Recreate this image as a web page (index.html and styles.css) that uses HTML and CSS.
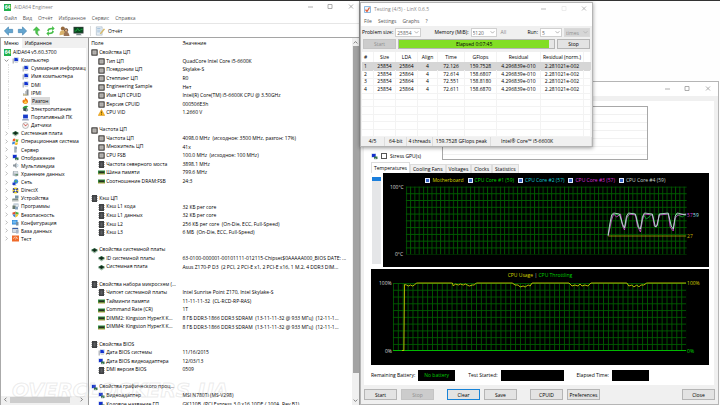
FILE: index.html
```html
<!DOCTYPE html>
<html lang="ru">
<head>
<meta charset="utf-8">
<title>AIDA64 Engineer</title>
<link rel="stylesheet" href="styles.css">
</head>
<body>
<svg class="defs" aria-hidden="true">
  <symbol id="cpu" viewBox="0 0 14 14"><rect x=".5" y=".5" width="13" height="13" rx="1.5" fill="#4a4744"/><rect x="3" y="3" width="8" height="8" fill="#c9c7c3"/><rect x="4.500" y="4.500" width="5" height="5" fill="#aaa8a5"/></symbol>
  <symbol id="chip" viewBox="0 0 14 14"><path d="M2 0h10v14H2z" fill="#3f4143"/><path d="M1 2h1v2H1zm0 4h1v2H1zm0 4h1v2H1zM12 2h1v2h-1zm0 4h1v2h-1zm0 4h1v2h-1z" fill="#777"/><path d="M5 3h4v8H5z" fill="#5c5f62"/></symbol>
  <symbol id="ram" viewBox="0 0 14 14"><path d="M0 3h14v7H0z" fill="#2d8a3e"/><path d="M2 5h10v3H2z" fill="#2a2d22"/><path d="M0 9h14v2H0z" fill="#b59a3c"/></symbol>
  <symbol id="board" viewBox="0 0 14 14"><path d="M0 6l7-4 7 4-7 5z" fill="#225c36"/><path d="M3 6l4-2 4 2-4 3z" fill="#14221a"/><path d="M0 6l7 5 7-5v2l-7 5-7-5z" fill="#9fb8a5"/></symbol>
  <symbol id="warn" viewBox="0 0 14 14"><path d="M7 1l6.500 12H.5z" fill="#f9b820" stroke="#d98b0c"/><path d="M6.300 5h1.400v4H6.300zm0 5h1.400v1.500H6.300z" fill="#40300a"/></symbol>
  <symbol id="pc" viewBox="0 0 14 14"><path d="M1 3h3v10H1z" fill="#b8bcc4"/><path d="M4 1h9v8H4z" fill="#9eb4dc"/><path d="M5 2h7v6H5z" fill="#1330cf"/><path d="M9 2h3v4z" fill="#5b86ee"/><path d="M6 9h5l1 3H5z" fill="#d2d6dd"/></symbol>
  <symbol id="display" viewBox="0 0 14 14"><path d="M1 1h9v8H1z" fill="#a9b9dc"/><path d="M2 2h7v6H2z" fill="#1330cf"/><path d="M6 7h7v5H6z" fill="#36734a"/><path d="M8 10l5 3H6z" fill="#c8ccd2"/></symbol>
  <symbol id="server" viewBox="0 0 14 14"><path d="M5 1h5v12H5z" fill="#bfc8cf"/><path d="M5 1h2v12H5z" fill="#8798a4"/><path d="M7.500 3h2v1h-2zm0 2h2v1h-2z" fill="#4e6d84"/></symbol>
  <symbol id="ipmi" viewBox="0 0 14 14"><path d="M2 8h3v5H2zm4-4h3v9H6z" fill="#c2c5c9"/><path d="M9 1h4v12H9z" fill="#818890"/><path d="M2 11h8v2H2z" fill="#b8a86c"/></symbol>
  <symbol id="flame" viewBox="0 0 14 14"><path d="M6 0c0 3 6 4 6 9 0 3-2 5-5 5s-6-2-6-5c0-2 1-3 2-4l1 2c2-2 2-4 2-7z" fill="#ee7b13"/><path d="M7 6c0 2 3 3 3 5 0 1-1 2-3 2s-3-1-3-3c1 0 2-1 3-4z" fill="#ffd044"/></symbol>
  <symbol id="power" viewBox="0 0 14 14"><path d="M1 7c1-5 8-7 12-4-3 0-4 3-4 5z" fill="#2f9a3f"/><path d="M3 6l8 1-2 6-7-2z" fill="#3b4a4c"/><circle cx="10" cy="10" r="2.500" fill="#88a7a2"/></symbol>
  <symbol id="laptop" viewBox="0 0 14 14"><path d="M2 1h10v8H2z" fill="#3e65d8"/><path d="M3 2h8v6H3z" fill="#173ac8"/><path d="M1 10h12l1 3H0z" fill="#98a4bb"/></symbol>
  <symbol id="gauge" viewBox="0 0 14 14"><circle cx="7" cy="7" r="6" fill="#f3f3f3" stroke="#858585"/><path d="M3 4l5 4M7 8l4-4" stroke="#d3392e" stroke-width="1.500"/></symbol>
  <symbol id="windows" viewBox="0 0 14 14"><path d="M2 2q3-2 5 0L6 7Q4 5 1 7z" fill="#ec5a29"/><path d="M8 2q3 2 5 0l-1 5q-2 2-5 0z" fill="#73b53a"/><path d="M1 8q3-2 5 0l-1 5q-2-2-5 0z" fill="#3b86d6"/><path d="M7 8q3 2 5 0l-1 5q-3 2-5 0z" fill="#f7bd25"/></symbol>
  <symbol id="sound" viewBox="0 0 14 14"><path d="M2 5h3l4-4v12L5 9H2z" fill="#8c969e"/><path d="M11 4q2 3 0 6" stroke="#9ec2da" fill="none" stroke-width="1.500"/></symbol>
  <symbol id="storage" viewBox="0 0 14 14"><path d="M2 2h10l1 9-5 2-7-2z" fill="#aeb7be"/><path d="M4 3h7v4H4z" fill="#d7dee2"/><path d="M7 8h5v3H7z" fill="#628c6b"/></symbol>
  <symbol id="net" viewBox="0 0 14 14"><circle cx="8" cy="5" r="4.500" fill="#3a8ae0"/><path d="M5 4l3-2 2 3-3 3z" fill="#55b05a"/><path d="M1 7h6v5H1z" fill="#1c3cc9"/><path d="M2 12h7v1H2z" fill="#aaa"/></symbol>
  <symbol id="dx" viewBox="0 0 14 14"><circle cx="7" cy="7" r="6" fill="#f2d51d"/><path d="M2 3l10 8M12 3L2 11" stroke="#273b9b" stroke-width="3"/><circle cx="7" cy="7" r="2" fill="#fff"/></symbol>
  <symbol id="devices" viewBox="0 0 14 14"><path d="M6 1h7v6H6z" fill="#7795a6"/><path d="M1 7h11l1 4H0z" fill="#7e8a84"/><path d="M0 11h13v2H0z" fill="#b7bdb9"/></symbol>
  <symbol id="apps" viewBox="0 0 14 14"><path d="M3 1h10v7H3z" fill="#a5b5c5"/><path d="M4 3h8v4H4z" fill="#e7edf1"/><path d="M1 5h6v7H1z" fill="#69796d"/><path d="M6 8h6v5H6z" fill="#89a5bd"/></symbol>
  <symbol id="shield" viewBox="0 0 14 14"><path d="M7 1v6H1V3q3 0 6-2z" fill="#e44b2c"/><path d="M7 1q3 2 6 2v4H7z" fill="#4caf43"/><path d="M1 7h6v6Q2 11 1 7z" fill="#3581de"/><path d="M7 7h6q-1 4-6 6z" fill="#f7c62c"/></symbol>
  <symbol id="config" viewBox="0 0 14 14"><path d="M0 2h11v9H0z" fill="#2b84d6"/><path d="M1 3h8v6H1z" fill="#72b8ee"/><path d="M8 6h5v7H8z" fill="#7790a5"/></symbol>
  <symbol id="db" viewBox="0 0 14 14"><path d="M1 2h11v9H1z" fill="#d4dbe4" stroke="#7b8798"/><path d="M1 2h11v2H1z" fill="#385da6"/><path d="M8 6h5v7H8z" fill="#a8b4c6"/></symbol>
  <symbol id="test" viewBox="0 0 14 14"><path d="M0 1h14v12H0z" fill="#ef6a2a"/><path d="M3 8a4 4 0 018 0M7 9l2-4" stroke="#fff" fill="none"/></symbol>
  <symbol id="down" viewBox="0 0 8 8"><path d="M1 2.500l3 3 3-3" fill="none" stroke="currentColor"/></symbol>
</svg>

<main class="desktop">
<section class="window aida" aria-label="AIDA64 Engineer">
  <header class="titlebar"><span class="logo">64</span><h1>AIDA64 Engineer</h1>
    <svg class="wincontrols" viewBox="0 0 48 8"><path d="M1 4h5M21 1.500h4v4h-4zM42 1.500l4 4M46 1.500l-4 4" fill="none" stroke="#999" stroke-width=".8"/></svg></header>
  <nav class="menubar"><a href="#">Файл</a><a href="#">Вид</a><a href="#">Отчёт</a><a href="#">Избранное</a><a href="#">Сервис</a><a href="#">Справка</a></nav>
  <div class="toolbar">
    <button aria-label="Назад"><svg viewBox="0 0 12 12"><path d="M1 6l5-5v3h5v4H6v3z" fill="#64a5cf" stroke="#3e7fae" stroke-width=".7"/></svg></button>
    <button aria-label="Вперёд"><svg viewBox="0 0 12 12"><path d="M11 6L6 1v3H1v4h5v3z" fill="#64a5cf" stroke="#3e7fae" stroke-width=".7"/></svg></button>
    <button aria-label="Вверх"><svg viewBox="0 0 12 12"><path d="M6 1l4 4-2 .3q-2 3 1 6.200Q4 10 5 5L2 5z" fill="#4cc64a" stroke="#269a32" stroke-width=".5"/></svg></button>
    <button aria-label="Обновить"><svg viewBox="0 0 12 12"><path d="M2 6q0-4 6-4V0l3 3-3 3V4Q4 4 4 6zM10 6q0 4-6 4v2L1 9l3-3v2q4 0 4-2z" fill="#46be48"/></svg></button>
    <button aria-label="Пользователи"><svg viewBox="0 0 12 12"><circle cx="4" cy="3" r="2.400" fill="#96693d"/><path d="M0 11q0-6 4-6t4 5z" fill="#d8b26b"/><circle cx="8" cy="5" r="2.300" fill="#5b3c28"/><circle cx="8" cy="5.500" r="1.500" fill="#e0ae80"/><path d="M5 12q0-5 3-5t4 5z" fill="#9b7456"/></svg></button>
    <button aria-label="Монитор"><svg viewBox="0 0 12 12"><path d="M0 1h12v8H0z" fill="#30383a"/><path d="M1 2h10v6H1z" fill="#064b1d"/><path d="M1 6h2l2-3 2 3 2-2h2" stroke="#25bd4c" fill="none" stroke-width=".8"/><path d="M4 9h4l2 2H3z" fill="#788"/></svg></button>
    <button class="report"><svg viewBox="0 0 12 12"><path d="M1 1h7v10H1z" fill="#e6eef5" stroke="#96a9b8" stroke-width=".6"/><path d="M2 3h4M2 5h4M2 7h4" stroke="#7fa9cb" stroke-width=".7"/><path d="M5 9l5-6 1.500 1-5 6z" fill="#d6b96a"/></svg>Отчёт</button>
  </div>
  <div class="workspace">
    <aside class="sidebar">
      <div class="sidetabs"><button class="on">Меню</button><button>Избранное</button></div>
      <ul class="tree">
        <li class="root"><span class="logo">64</span>AIDA64 v5.60.3700</li>
        <li class="open"><svg class="chev"><use href="#down"/></svg><svg><use href="#pc"/></svg>Компьютер</li>
        <li class="sub"><svg><use href="#pc"/></svg>Суммарная информация</li>
        <li class="sub"><svg><use href="#pc"/></svg>Имя компьютера</li>
        <li class="sub"><svg><use href="#pc"/></svg>DMI</li>
        <li class="sub"><svg><use href="#ipmi"/></svg>IPMI</li>
        <li class="sub"><svg><use href="#flame"/></svg><span class="picked">Разгон</span></li>
        <li class="sub"><svg><use href="#power"/></svg>Электропитание</li>
        <li class="sub"><svg><use href="#laptop"/></svg>Портативный ПК</li>
        <li class="sub"><svg><use href="#gauge"/></svg>Датчики</li>
        <li><svg class="chev"><use href="#down"/></svg><svg><use href="#board"/></svg>Системная плата</li>
        <li><svg class="chev"><use href="#down"/></svg><svg><use href="#windows"/></svg>Операционная система</li>
        <li><svg class="chev"><use href="#down"/></svg><svg><use href="#server"/></svg>Сервер</li>
        <li><svg class="chev"><use href="#down"/></svg><svg><use href="#display"/></svg>Отображение</li>
        <li><svg class="chev"><use href="#down"/></svg><svg><use href="#sound"/></svg>Мультимедиа</li>
        <li><svg class="chev"><use href="#down"/></svg><svg><use href="#storage"/></svg>Хранение данных</li>
        <li><svg class="chev"><use href="#down"/></svg><svg><use href="#net"/></svg>Сеть</li>
        <li><svg class="chev"><use href="#down"/></svg><svg><use href="#dx"/></svg>DirectX</li>
        <li><svg class="chev"><use href="#down"/></svg><svg><use href="#devices"/></svg>Устройства</li>
        <li><svg class="chev"><use href="#down"/></svg><svg><use href="#apps"/></svg>Программы</li>
        <li><svg class="chev"><use href="#down"/></svg><svg><use href="#shield"/></svg>Безопасность</li>
        <li><svg class="chev"><use href="#down"/></svg><svg><use href="#config"/></svg>Конфигурация</li>
        <li><svg class="chev"><use href="#down"/></svg><svg><use href="#db"/></svg>База данных</li>
        <li><svg class="chev"><use href="#down"/></svg><svg><use href="#test"/></svg>Тест</li>
      </ul>
      <div class="hscroll"><svg class="left"><use href="#down"/></svg><span></span><svg class="right"><use href="#down"/></svg></div>
    </aside>
    <div class="details">
      <table class="props">
        <thead><tr><th>Поле</th><th>Значение</th></tr></thead>
        <tbody>
          <tr class="group"><th><svg><use href="#cpu"/></svg>Свойства ЦП</th></tr>
          <tr><td><svg><use href="#cpu"/></svg>Тип ЦП</td><td>QuadCore Intel Core i5-6600K</td></tr>
          <tr><td><svg><use href="#cpu"/></svg>Псевдоним ЦП</td><td>Skylake-S</td></tr>
          <tr><td><svg><use href="#cpu"/></svg>Степпинг ЦП</td><td>R0</td></tr>
          <tr><td><svg><use href="#cpu"/></svg>Engineering Sample</td><td>Нет</td></tr>
          <tr><td><svg><use href="#cpu"/></svg>Имя ЦП CPUID</td><td>Intel(R) Core(TM) i5-6600K CPU @ 3.50GHz</td></tr>
          <tr><td><svg><use href="#cpu"/></svg>Версия CPUID</td><td>000506E3h</td></tr>
          <tr><td><svg><use href="#warn"/></svg>CPU VID</td><td>1.2660 V</td></tr>
          <tr></tr>
          <tr class="group"><th><svg><use href="#cpu"/></svg>Частота ЦП</th></tr>
          <tr><td><svg><use href="#cpu"/></svg>Частота ЦП</td><td>4098.0 MHz&nbsp; (исходное: 3500 MHz, разгон: 17%)</td></tr>
          <tr><td><svg><use href="#cpu"/></svg>Множитель ЦП</td><td>41x</td></tr>
          <tr><td><svg><use href="#cpu"/></svg>CPU FSB</td><td>100.0 MHz&nbsp; (исходное: 100 MHz)</td></tr>
          <tr><td><svg><use href="#chip"/></svg>Частота северного моста</td><td>3898.1 MHz</td></tr>
          <tr><td><svg><use href="#ram"/></svg>Шина памяти</td><td>799.6 MHz</td></tr>
          <tr><td><svg><use href="#ram"/></svg>Соотношение DRAM:FSB</td><td>24:3</td></tr>
          <tr></tr>
          <tr class="group"><th><svg><use href="#chip"/></svg>Кэш ЦП</th></tr>
          <tr><td><svg><use href="#chip"/></svg>Кэш L1 кода</td><td>32 КБ per core</td></tr>
          <tr><td><svg><use href="#chip"/></svg>Кэш L1 данных</td><td>32 КБ per core</td></tr>
          <tr><td><svg><use href="#chip"/></svg>Кэш L2</td><td>256 КБ per core&nbsp; (On-Die, ECC, Full-Speed)</td></tr>
          <tr><td><svg><use href="#chip"/></svg>Кэш L3</td><td>6 МБ&nbsp; (On-Die, ECC, Full-Speed)</td></tr>
          <tr></tr>
          <tr class="group"><th><svg><use href="#board"/></svg>Свойства системной платы</th></tr>
          <tr><td><svg><use href="#board"/></svg>ID системной платы</td><td>63-0100-000001-00101111-012115-Chipset$0AAAAA000_BIOS DATE: ...</td></tr>
          <tr><td><svg><use href="#board"/></svg>Системная плата</td><td>Asus Z170-P D3&nbsp; (2 PCI, 2 PCI-E x1, 2 PCI-E x16, 1 M.2, 4 DDR3 DIM...</td></tr>
          <tr></tr>
          <tr class="group"><th><svg><use href="#chip"/></svg>Свойства набора микросхем (...</th></tr>
          <tr><td><svg><use href="#chip"/></svg>Чипсет системной платы</td><td>Intel Sunrise Point Z170, Intel Skylake-S</td></tr>
          <tr><td><svg><use href="#ram"/></svg>Тайминги памяти</td><td>11-11-11-32&nbsp; (CL-RCD-RP-RAS)</td></tr>
          <tr><td><svg><use href="#ram"/></svg>Command Rate (CR)</td><td>1T</td></tr>
          <tr><td><svg><use href="#ram"/></svg>DIMM2: Kingston HyperX K...</td><td>8 ГБ DDR3-1866 DDR3 SDRAM&nbsp; (13-11-11-32 @ 933 МГц)&nbsp; (12-11-1...</td></tr>
          <tr><td><svg><use href="#ram"/></svg>DIMM4: Kingston HyperX K...</td><td>8 ГБ DDR3-1866 DDR3 SDRAM&nbsp; (13-11-11-32 @ 933 МГц)&nbsp; (12-11-1...</td></tr>
          <tr></tr>
          <tr class="group"><th><svg><use href="#chip"/></svg>Свойства BIOS</th></tr>
          <tr><td><svg><use href="#pc"/></svg>Дата BIOS системы</td><td>11/16/2015</td></tr>
          <tr><td><svg><use href="#display"/></svg>Дата BIOS видеоадаптера</td><td>12/03/13</td></tr>
          <tr><td><svg><use href="#chip"/></svg>DMI версия BIOS</td><td>0509</td></tr>
          <tr></tr>
          <tr class="group"><th><svg><use href="#display"/></svg>Свойства графического проц...</th></tr>
          <tr><td><svg><use href="#display"/></svg>Видеоадаптер</td><td>MSI N780Ti (MS-V298)</td></tr>
          <tr><td><svg><use href="#display"/></svg>Кодовое название ГП</td><td>GK110B&nbsp; (PCI Express 3.0 x16 10DE / 100A, Rev B1)</td></tr>
        </tbody>
      </table>
      <div class="vscroll"><svg class="up"><use href="#down"/></svg><span></span><svg><use href="#down"/></svg></div>
    </div>
  </div>
  <p class="watermark">OVERCLOCKERS.UA</p>
</section>

<section class="window stability" aria-label="Stability test">
  <header class="titlebar"><svg class="wincontrols" viewBox="0 0 48 8"><path d="M1 4h5M21 1.500h4v4h-4zM42 1.500l4 4M46 1.500l-4 4" fill="none" stroke="#999" stroke-width=".8"/></svg></header>
  <div class="panel">
    <div class="stress">
      <label><svg><use href="#display"/></svg><input type="checkbox">Stress GPU(s)</label>
      <div class="log"></div>
    </div>
    <div class="tabs"><button class="on">Temperatures</button><button>Cooling Fans</button><button>Voltages</button><button>Clocks</button><button>Statistics</button></div>
    <div class="sensors">
      <div class="gutter"></div>
      <div class="graph">
        <div class="legend">
          <label class="yellow"><input type="checkbox" checked>Motherboard</label>
          <label class="green"><input type="checkbox" checked>CPU Core #1 (59)</label>
          <label class="cyan"><input type="checkbox" checked>CPU Core #2 (57)</label>
          <label class="magenta"><input type="checkbox" checked>CPU Core #3 (57)</label>
          <label class="white"><input type="checkbox" checked>CPU Core #4 (59)</label>
        </div>
        <svg class="plot" viewBox="382 185 328 82" preserveAspectRatio="none">
          <defs><pattern id="g1" x="405" y="186.500" width="4.300" height="6.770" patternUnits="userSpaceOnUse"><path d="M0 .5h4.300M.5 0v6.770" stroke="#005c00" stroke-width=".9"/></pattern></defs>
          <rect x="405" y="186.500" width="282.500" height="68" fill="url(#g1)"/>
          <g fill="none" stroke-width=".8">
            <path d="M608.500 236H687" stroke="#b5a500"/>
            <path d="M608.500 236L611 221L613 214L620 215L622 222L624 227L626 226L628 215L634 213L637 217L640 229L642 226L644 215L647 219L651 216L653 214L656 227L658 226L660 214L669 214L672 226L674 228L677 214L683 217L687 214" stroke="#18b53a"/>
            <path d="M608.500 236L612 220L614 214L617 217L621 214L623 226L625 230L627 218L630 214L636 215L638 226L641 232L643 220L645 214L653 215L655 226L657 227L660 215L669 214L671 227L674 231L676 218L679 215L687 214" stroke="#dc4bdc"/>
            <path d="M608.500 235L610 225L612 215L614 213L620 214L623 224L625 228L627 216L629 213L636 214L639 227L641 229L643 217L645 213L653 214L656 227L658 225L660 214L669 213L672 226L674 229L676 216L678 213L687 215" stroke="#c9e9e2"/>
          </g>
          <g class="axis"><text x="389" y="189">100°C</text><text x="394" y="256">0°C</text><text x="688" y="217.500" fill="#d941d9">57</text><text x="694" y="217.500" fill="#9eeaf0">59</text><text x="688" y="238" fill="#c9b900">27</text></g>
        </svg>
      </div>
    </div>
    <div class="graph usage">
      <p class="caption"><span class="yellow">CPU Usage</span> | <span class="green">CPU Throttling</span></p>
      <svg class="plot" viewBox="371 281 339 84" preserveAspectRatio="none">
        <defs><pattern id="g2" x="393" y="283" width="4.900" height="6.770" patternUnits="userSpaceOnUse"><path d="M0 .5h4.900M.5 0v6.770" stroke="#005c00" stroke-width=".9"/></pattern></defs>
        <rect x="393" y="283" width="294" height="67.500" fill="url(#g2)"/>
        <path d="M393 350.500H687" stroke="#00b900"/>
        <path d="M402 350.500h2l.6-66 2 .5 2 1 2-1 2 1 2-1 2-2h36l1 3 2-2 3 1 2-1 3 1 2-1 4 2 3-1 2 0 2-2h36l3 2 3 0 2 2 3-1 2 1 3-2 2 1 2-3h37l3 3 3-1 3 1 2-2 2 2 3-1 3 1 3-3h36l2 3 3-1 2 2 3-2 2 2 2-2 3 0 3-2H687" fill="none" stroke="#c6c900" stroke-width=".9"/>
        <g class="axis"><text x="379" y="285">100%</text><text x="385" y="353">0%</text><text x="688" y="285" fill="#d2d200">100%</text><text x="688" y="353" fill="#00d900">0%</text></g>
      </svg>
    </div>
    <div class="status"><span>Remaining Battery:</span><output class="box short">No battery</output><span>Test Started:</span><output class="box long"></output><span>Elapsed Time:</span><output class="box short"></output></div>
  </div>
  <footer class="actions"><button>Start</button><button disabled>Stop</button><button class="focus gap">Clear</button><button>Save</button><button class="gap">CPUID</button><button>Preferences</button><button class="last">Close</button></footer>
</section>

<section class="window linx" aria-label="LinX">
  <header class="titlebar"><svg class="appicon" viewBox="0 0 14 14"><path d="M1 1h12v12H1z" fill="#eef4fa" stroke="#6ea5d6" stroke-width="1.500"/><path d="M3 7l3 4 5-8" fill="none" stroke="#e2562c" stroke-width="2.500"/></svg><h2>Testing (4/5) - LinX 0.6.5</h2>
    <svg class="wincontrols" viewBox="0 0 48 8"><path d="M1 4h5M42 1.500l4 4M46 1.500l-4 4" fill="none" stroke="#aaa" stroke-width=".8"/><path d="M22 1.500h4v4h-4z" fill="none" stroke="#e8e8e8" stroke-width=".8"/></svg></header>
  <nav class="menubar"><a href="#">File</a><a href="#">Settings</a><a href="#">Graphs</a><a href="#">?</a></nav>
  <form class="options">
    <label for="size">Problem size:</label><select id="size"><option>25854</option></select>
    <label for="mem" class="push">Memory (MiB):</label><select id="mem"><option>5120</option></select><button type="button" class="all">All</button>
    <label for="run" class="push">Run:</label><select id="run"><option>5</option></select><select class="times" aria-label="Unit" disabled><option>times</option></select>
  </form>
  <div class="runbar"><button disabled>Start</button><div class="progress"><div>Elapsed 0:07:45</div></div><button>Stop</button></div>
  <table class="results">
    <thead><tr><th>#</th><th>Size</th><th>LDA</th><th>Align</th><th>Time</th><th>GFlops</th><th>Residual</th><th>Residual (norm.)</th><th></th></tr></thead>
    <tbody>
      <tr class="sel"><td>1</td><td>25854</td><td>25864</td><td>4</td><td>72.126</td><td>159.7528</td><td>4.296839e-010</td><td>2.281021e-002</td><td></td></tr>
      <tr><td>2</td><td>25854</td><td>25864</td><td>4</td><td>72.614</td><td>158.6807</td><td>4.296839e-010</td><td>2.281021e-002</td><td></td></tr>
      <tr><td>3</td><td>25854</td><td>25864</td><td>4</td><td>72.551</td><td>158.8180</td><td>4.296839e-010</td><td>2.281021e-002</td><td></td></tr>
      <tr><td>4</td><td>25854</td><td>25864</td><td>4</td><td>72.611</td><td>158.6870</td><td>4.296839e-010</td><td>2.281021e-002</td><td></td></tr>
      <tr><td></td><td></td><td></td><td></td><td></td><td></td><td></td><td></td><td></td></tr>
      <tr><td></td><td></td><td></td><td></td><td></td><td></td><td></td><td></td><td></td></tr>
      <tr><td></td><td></td><td></td><td></td><td></td><td></td><td></td><td></td><td></td></tr>
      <tr><td></td><td></td><td></td><td></td><td></td><td></td><td></td><td></td><td></td></tr>
      <tr><td></td><td></td><td></td><td></td><td></td><td></td><td></td><td></td><td></td></tr>
      <tr><td></td><td></td><td></td><td></td><td></td><td></td><td></td><td></td><td></td></tr>
    </tbody>
  </table>
  <footer class="statusbar"><span>4/5</span><span>64-bit</span><span>4 threads</span><span>159.7528 GFlops peak</span><span>Intel® Core™ i5-6600K</span></footer>
</section>
</main>
</body>
</html>
```
FILE: styles.css
```css
* { box-sizing: border-box; }
html, body { height: 100%; }
body {
  margin: 0;
  background: #fefefe;
  color: #000;
  font: 5px/8px "Open Sans", "Noto Sans", sans-serif;
}
button, input, select { font: inherit; color: inherit; margin: 0; padding: 0; }
h1, h2, p { margin: 0; font: inherit; }
a { color: inherit; text-decoration: none; }
table { border-spacing: 0; }
th, td { padding: 0; font-weight: normal; text-align: left; }
.defs { position: absolute; width: 0; height: 0; }

.desktop { position: relative; height: 100%; overflow: hidden; border-top: 1px solid #333; }
.window { position: absolute; display: flex; flex-direction: column; background: #fff; }
.titlebar { display: flex; align-items: center; flex: none; color: #858585; }
.wincontrols { width: 48px; height: 8px; margin-left: auto; }
.menubar { display: flex; color: #555; flex: none; align-items: center; }
.logo { flex: none; width: 7px; height: 7px; background: #22b14c; color: #fff; font-size: 5px; line-height: 7px; font-weight: bold; text-align: center; }

/* AIDA64 */
.aida { inset: 0 50% 0 0; border-right: 1px solid #999; overflow: hidden; }
.aida .titlebar { height: 12px; padding: 0 4px; gap: 3px; }
.aida .menubar { height: 10px; padding-left: 4px; gap: 6px; }
.toolbar { display: flex; flex: none; align-items: center; gap: 3px; height: 14px; padding-left: 3px; border-top: 1px solid #e6e6e6; }
.toolbar button { display: flex; align-items: center; gap: 2px; border: 0; background: none; }
.toolbar svg { width: 11px; height: 10px; }
.toolbar .report { margin-left: 3px; padding-left: 4px; border-left: 1px solid #ddd; }
.workspace { display: flex; flex: 1; min-height: 0; border-top: 1px solid #a5a5a5; background: #f0f0f0; }
.sidebar { display: flex; flex-direction: column; width: 24%; border-left: 1px solid #aaa; }
.sidetabs { display: flex; flex: none; height: 10px; }
.sidetabs button { border: 0; background: none; padding: 0 3px; }
.sidetabs .on { background: #fff; }
.tree { display: grid; grid-template-rows: repeat(24, minmax(0, 1fr)); flex: none; height: 195px; margin: 0; padding: 0; list-style: none; background: #fff; overflow: hidden; }
.tree li { display: flex; align-items: center; gap: 2px; padding-left: 3px; white-space: nowrap; }
.tree svg { flex: none; width: 7px; height: 7px; }
.tree .chev { width: 5px; height: 5px; margin-right: 1px; color: #999; transform: rotate(-90deg); }
.tree .open .chev { color: #555; transform: none; }
.tree .sub { margin-left: 7px; padding-left: 13px; border-left: 1px dotted #ddd; }
.tree .picked { background: #d9d9d9; padding: 0 1px; line-height: 8px; }
.sidebar::after { content: ""; order: 1; flex: 1; background: #fff; }
.hscroll { order: 2; display: flex; align-items: center; flex: none; height: 7px; margin-bottom: 2px; padding: 0 2px; gap: 2px; background: #f0f0f0; }
.hscroll svg, .vscroll svg { width: 5px; height: 5px; color: #444; }
.hscroll .left { transform: rotate(90deg); }
.hscroll .right { transform: rotate(-90deg); margin-left: auto; }
.hscroll span { width: 60px; height: 6px; background: #cdcdcd; }
.details { display: flex; flex: 1; min-width: 0; margin-left: 2px; border-left: 1px solid #999; background: #fff; }
.props { display: flex; flex-direction: column; flex: 1; min-width: 0; margin-bottom: -3px; }
.props thead { height: 10px; flex: none; line-height: 11px; }
.props tbody { display: grid; flex: 1; min-height: 0; grid-template-rows: repeat(42, minmax(0, 1fr)); }
.props tr { display: grid; grid-template-columns: minmax(0, 35%) minmax(0, 65%); align-items: center; padding-left: 2px; }
.props th, .props td { overflow: hidden; white-space: nowrap; }
.props tbody td:first-child { padding-left: 7px; }
.props tbody tr.group { grid-template-columns: 1fr; }
.props svg { width: 7px; height: 7px; margin-right: 1px; vertical-align: middle; }
.vscroll { display: flex; flex-direction: column; align-items: center; flex: none; width: 7px; padding: 2px 0; background: #f0f0f0; }
.vscroll .up { transform: rotate(180deg); }
.vscroll span { width: 6px; flex: 1; margin: 1px 0 25px; background: #a3a3a3; }
.watermark { position: absolute; left: 12px; bottom: 5px; color: transparent; -webkit-text-stroke: 1px rgba(190, 190, 190, .3); font: italic bold 20px/20px "DejaVu Sans", sans-serif; white-space: nowrap; }

/* Stability test */
.stability { inset: 80px 1px 0 50%; border: 1px solid #b5b5b5; background: #f0f0f0; }
.stability .titlebar { height: 14px; background: #fff; padding-right: 6px; }
.panel { flex: 1; display: flex; flex-direction: column; margin: 5px 4px 0 3px; padding: 5px 5px 0 7px; background: #fff; min-height: 0; }
.stress { display: flex; align-items: flex-end; flex: none; height: 54px; }
.stress label { display: flex; align-items: center; gap: 3px; width: 71px; }
.stress svg { width: 7px; height: 7px; }
.stress .log { width: 206px; height: 54px; border: 1px solid #a8a8a8; background: repeating-linear-gradient(#fff 0 7px, #f1f1f1 7px 8px); }
input[type="checkbox"] { appearance: none; width: 6px; height: 6px; border: 1px solid #555; background: #fff; }
.tabs { display: flex; align-items: flex-end; flex: none; height: 13px; }
.tabs button { height: 9px; padding: 0 2px; border: 1px solid #ddd; border-bottom: 0; background: #f0f0f0; }
.tabs .on { height: 11px; background: #fff; }
.sensors { display: flex; flex: none; height: 94px; }
.gutter { width: 9px; margin: 4px 2px 3px 1px; background: #e5e6e8; border-top: 4px solid #1b7fdc; }
.graph { display: flex; flex-direction: column; flex: 1; background: #000; min-width: 0; }
.legend { display: flex; align-items: center; gap: 4px; height: 12px; flex: none; padding: 2px 0 0 13%; }
.legend label { display: flex; align-items: center; gap: 2px; white-space: nowrap; }
.legend input { width: 5px; height: 5px; border: 1px solid #e4ecff; background: #3766c8; }
.plot { flex: 1; width: 100%; min-height: 0; }
.axis { fill: #ddd; font-size: 5px; }
.yellow { color: #d6d600; }
.green { color: #00d100; }
.cyan { color: #14c8cf; }
.magenta { color: #d931d9; }
.white { color: #c7d5cd; }
.usage { flex: none; height: 96px; margin-top: 2px; }
.caption { height: 12px; padding-top: 2px; text-align: center; color: #ccc; flex: none; }
.status { display: flex; align-items: center; flex: 1; gap: 3px; }
.box { height: 11px; margin-right: 10px; background: #000; color: #00c800; text-align: center; line-height: 11px; }
.short { width: 37px; }
.long { width: 63px; }
.actions { display: flex; flex: none; gap: 4px; height: 19px; padding: 4px 3px; }
.actions button, .runbar button { width: 33px; border: 1px solid #b5b5b5; background: #e3e3e3; line-height: 8px; }
.actions button:disabled, .runbar button:disabled { background: #ccc; border-color: #c4c4c4; color: #8d8d8d; }
.actions .gap { margin-left: 9px; }
.actions .focus { border-color: #1883d7; }
.actions .last { margin-left: auto; }

/* LinX */
.linx { left: 50%; top: 1px; width: 233px; height: 145px; background: #f0f0f0; border: 1px solid #b4b4b4; box-shadow: 0 1px 4px rgba(0, 0, 0, .4); }
.linx .titlebar { height: 12px; padding: 0 4px 0 3px; gap: 3px; background: #fff; }
.appicon { width: 7px; height: 7px; }
.linx .menubar { height: 11px; gap: 6px; padding-left: 3px; background: #fff; }
.options { display: flex; align-items: center; flex: none; height: 12px; gap: 2px; padding: 0 2px 0 1px; }
.options select { appearance: none; width: 26px; height: 9px; padding: 0 1px; border: 1px solid #d0d0d0; color: #666; background: #fff url("data:image/svg+xml,%3Csvg xmlns='http://www.w3.org/2000/svg' viewBox='0 0 8 8'%3E%3Cpath d='M1 2l3 3 3-3' fill='none' stroke='%23888'/%3E%3C/svg%3E") right 1px center / 5px 5px no-repeat; }
.options .push { margin-left: auto; }
.options #run { width: 22px; }
.options .all { border: 0; background: none; color: #888; margin: 0 8px 0 2px; }
.options .times { background-color: #ccc; }
.runbar { display: flex; flex: none; gap: 2px; height: 12px; padding: 1px 2px; }
.progress { flex: 1; border: 1px solid #b5b5b5; background: #e6e6e6; }
.progress div { width: 97%; height: 100%; background: #82de24; text-align: center; line-height: 8px; }
.results { flex: 1; min-height: 0; display: flex; flex-direction: column; margin: 2px 1px 0; background: #fff; color: #000; }
.results thead { height: 10px; flex: none; line-height: 10px; }
.results tbody { flex: 1; min-height: 0; display: grid; grid-auto-rows: minmax(0, 1fr); }
.results tr { display: grid; grid-template-columns: 12fr 22fr 22fr 20fr 27fr 32fr 44fr 43fr 7fr; }
.results th, .results td { text-align: center; border-right: 1px solid #f3f3f3; white-space: nowrap; }
.results td { border-bottom: 1px solid #f3f3f3; line-height: 8px; }
.results th:first-child, .results td:first-child { text-align: left; padding-left: 2px; }
.results .sel td { background: #d6d6d6; border-color: #d6d6d6; }
.statusbar { display: grid; grid-template-columns: 24fr 22fr 25fr 58fr 100fr; flex: none; height: 9px; line-height: 9px; text-align: center; }
.statusbar span { border-right: 1px solid #ddd; white-space: nowrap; }
.statusbar span:last-child { padding-right: 28px; }
```
